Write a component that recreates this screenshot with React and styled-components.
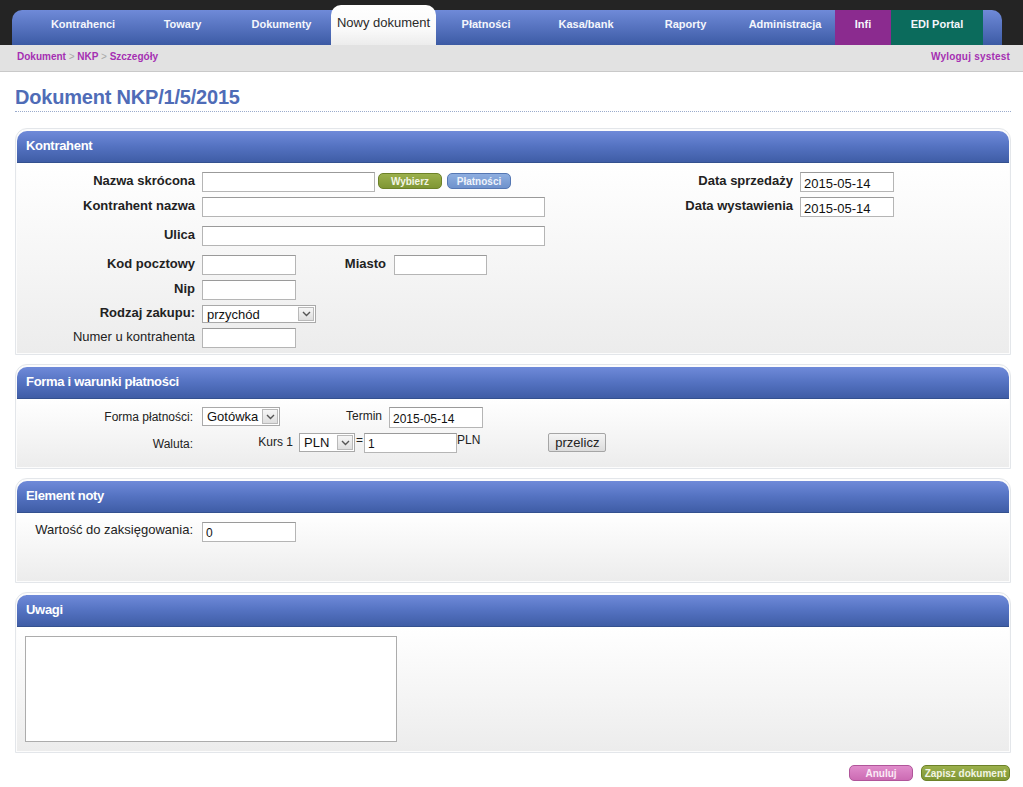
import React from "react";
import styled, { createGlobalStyle } from "styled-components";

const Global = createGlobalStyle`
  html, body { margin: 0; padding: 0; background: #fff; }
  body { font-family: "Liberation Sans", Arial, sans-serif; color: #222; }
  * { box-sizing: border-box; }
`;

const Page = styled.div`
  width: 1023px;
  min-height: 787px;
  background: #fff;
`;

const TopBar = styled.div`
  background: #242424;
  padding: 10px 21px 0 12px;
`;

const TabStrip = styled.nav`
  display: flex;
  height: 35px;
  padding-left: 21px;
  border-radius: 10px 10px 0 0;
  background: linear-gradient(#6f8ad8, #4462ad 85%, #3c5aa3);
`;

const Tab = styled.div`
  width: ${(p) => p.$w}px;
  height: 35px;
  padding-top: 7px;
  text-align: center;
  font-size: 11px;
  line-height: 14px;
  font-weight: bold;
  color: #f4f6fc;
  background: ${(p) => p.$bg || "transparent"};
`;

const ActiveTab = styled.div`
  width: 105px;
  height: 40px;
  margin-top: -5px;
  padding-top: 10px;
  text-align: center;
  font-size: 13px;
  line-height: 16px;
  color: #2a2a2a;
  border-radius: 10px 10px 0 0;
  background: linear-gradient(#ffffff, #fafafa 60%, #ececec);
`;

const Crumbs = styled.div`
  display: flex;
  justify-content: space-between;
  height: 27px;
  padding: 6px 13px 0 17px;
  background: #e2e2e2;
  border-bottom: 1px solid #c9c9c9;
  font-size: 10px;
  line-height: 12px;
  font-weight: bold;
  color: #a52fb2;
`;

const Sep = styled.span`
  color: #a8a8a8;
  font-weight: normal;
`;

const Logout = styled.span`
  letter-spacing: 0.2px;
`;

const Content = styled.div`
  padding: 0 12px 0 15px;
`;

const Title = styled.h1`
  margin: 14px 0 0;
  padding-bottom: 2px;
  font-size: 20px;
  line-height: 23px;
  font-weight: bold;
  color: #4f6cb7;
  border-bottom: 1px dotted #9aabcc;
  letter-spacing: -0.2px;
`;

const Panel = styled.section`
  margin-top: ${(p) => p.$mt}px;
  border: 1px solid #e3e6ea;
  border-radius: 12px 12px 0 0;
  padding: 2px 1px 1px;
  background: #fcfcfc;
`;

const PanelHead = styled.h2`
  margin: 0;
  height: 32px;
  padding: 7px 0 0 9px;
  font-size: 13px;
  line-height: 16px;
  font-weight: bold;
  color: #fff;
  border-radius: 10px 10px 0 0;
  background: linear-gradient(#6f8ad9, #5472c1 50%, #3f5da6);
  border-bottom: 1px solid #34518f;
  letter-spacing: -0.3px;
`;

const PanelBody = styled.div`
  height: ${(p) => p.$h}px;
  padding: ${(p) => p.$pad};
  background: linear-gradient(#ffffff, #f5f5f5 55%, #ececec);
  display: ${(p) => (p.$split ? "flex" : "block")};
  justify-content: space-between;
`;

const Column = styled.div`
  display: flex;
  flex-direction: column;
  padding-right: ${(p) => p.$pr || 0}px;
`;

const Row = styled.div`
  display: flex;
  align-items: flex-start;
  margin-top: ${(p) => p.$mt || 0}px;
`;

const Label = styled.div`
  width: ${(p) => p.$w}px;
  padding-right: ${(p) => (p.$pr ?? 7)}px;
  padding-top: ${(p) => (p.$pt ?? 1)}px;
  text-align: right;
  font-size: ${(p) => p.$fs || 13}px;
  line-height: 16px;
  font-weight: ${(p) => (p.$bold ? "bold" : "normal")};
  color: #222;
  white-space: nowrap;
  flex-shrink: 0;
`;

const Inline = styled.span`
  font-size: ${(p) => p.$fs || 12}px;
  line-height: 14px;
  padding: 0 ${(p) => p.$px || 0}px;
  color: #222;
`;

const Input = styled.input`
  width: ${(p) => p.$w}px;
  height: ${(p) => p.$h || 20}px;
  margin: 0;
  padding: 2px 3px 0;
  font-family: "Liberation Sans", Arial, sans-serif;
  font-size: ${(p) => p.$fs || 13}px;
  color: #111;
  background: #fff;
  border: 1px solid #b5b5b5;
  border-top-color: #9a9a9a;
  outline: none;
`;

const SelectBox = styled.div`
  display: flex;
  align-items: center;
  justify-content: space-between;
  width: ${(p) => p.$w}px;
  height: ${(p) => p.$h || 19}px;
  padding: 0 1px 0 4px;
  font-size: 13px;
  color: #111;
  background: #fff;
  border: 1px solid #a9a9a9;
`;

const Arrow = styled.span`
  display: flex;
  align-items: center;
  justify-content: center;
  width: 16px;
  height: calc(100% - 2px);
  border: 1px solid #b9b9b9;
  background: linear-gradient(#f6f6f6, #dedede);
`;

const SmallBtn = styled.button`
  width: ${(p) => p.$w}px;
  height: 16px;
  margin: 1px 0 0 ${(p) => p.$ml || 0}px;
  padding: 0;
  font-family: "Liberation Sans", Arial, sans-serif;
  font-size: 10px;
  font-weight: bold;
  color: ${(p) => p.$fg};
  border-radius: 5px;
  border: 1px solid ${(p) => p.$bd};
  background: ${(p) => p.$bg};
`;

const GrayBtn = styled.button`
  width: 58px;
  height: 19px;
  margin: 0 0 0 ${(p) => p.$ml}px;
  padding: 0;
  font-family: "Liberation Sans", Arial, sans-serif;
  font-size: 13px;
  color: #222;
  border: 1px solid #a5a5a5;
  border-radius: 2px;
  background: linear-gradient(#f4f4f4, #dcdcdc);
`;

const Notes = styled.textarea`
  display: block;
  width: 372px;
  height: 106px;
  margin: 0;
  resize: none;
  background: #fff;
  border: 1px solid #acacac;
`;

const Actions = styled.div`
  display: flex;
  justify-content: flex-end;
  gap: 8px;
  margin-top: 11px;
  padding-right: 1px;
`;

const Chevron = () => (
  <svg width="9" height="6" viewBox="0 0 9 6">
    <polyline points="1,1 4.5,4.5 8,1" fill="none" stroke="#555" strokeWidth="1.4" />
  </svg>
);

const Select = ({ w, h, children }) => (
  <SelectBox $w={w} $h={h}>
    <span>{children}</span>
    <Arrow>
      <Chevron />
    </Arrow>
  </SelectBox>
);

const green = "linear-gradient(#9bb04c, #7f9634)";
const blue = "linear-gradient(#8eaee0, #6f92cc)";
const pink = "linear-gradient(#e08ccb, #cc6bb3)";

export default function App() {
  return (
    <Page>
      <Global />
      <TopBar>
        <TabStrip>
          <Tab $w={100}>Kontrahenci</Tab>
          <Tab $w={99}>Towary</Tab>
          <Tab $w={99}>Dokumenty</Tab>
          <ActiveTab>Nowy dokument</ActiveTab>
          <Tab $w={100}>Płatności</Tab>
          <Tab $w={100}>Kasa/bank</Tab>
          <Tab $w={99}>Raporty</Tab>
          <Tab $w={100}>Administracja</Tab>
          <Tab $w={56} $bg="#8b2b8f">Infi</Tab>
          <Tab $w={92} $bg="#0b6b5c">EDI Portal</Tab>
        </TabStrip>
      </TopBar>
      <Crumbs>
        <span>
          Dokument <Sep>&gt;</Sep> NKP <Sep>&gt;</Sep> Szczegóły
        </span>
        <Logout>Wyloguj systest</Logout>
      </Crumbs>
      <Content>
        <Title>Dokument NKP/1/5/2015</Title>

        <Panel $mt={16}>
          <PanelHead>Kontrahent</PanelHead>
          <PanelBody $h={190} $pad="9px 0 5px 0" $split>
            <Column>
              <Row>
                <Label $w={185} $bold>Nazwa skrócona</Label>
                <Input $w={173} />
                <SmallBtn $w={64} $ml={3} $bg={green} $bd="#6c8128" $fg="#f2f5e4">Wybierz</SmallBtn>
                <SmallBtn $w={64} $ml={5} $bg={blue} $bd="#5577b3" $fg="#eef3fb">Płatności</SmallBtn>
              </Row>
              <Row $mt={5}>
                <Label $w={185} $bold>Kontrahent nazwa</Label>
                <Input $w={343} />
              </Row>
              <Row $mt={9}>
                <Label $w={185} $bold>Ulica</Label>
                <Input $w={343} />
              </Row>
              <Row $mt={9}>
                <Label $w={185} $bold>Kod pocztowy</Label>
                <Input $w={94} />
                <Label $w={98} $pr={8} $bold>Miasto</Label>
                <Input $w={93} />
              </Row>
              <Row $mt={5}>
                <Label $w={185} $bold>Nip</Label>
                <Input $w={94} />
              </Row>
              <Row $mt={5}>
                <Label $w={185} $pt={0} $bold>Rodzaj zakupu:</Label>
                <Select w={114} h={18}>przychód</Select>
              </Row>
              <Row $mt={5}>
                <Label $w={185}>Numer u kontrahenta</Label>
                <Input $w={94} />
              </Row>
            </Column>
            <Column $pr={115}>
              <Row>
                <Label $w={140} $bold>Data sprzedaży</Label>
                <Input $w={94} defaultValue="2015-05-14" />
              </Row>
              <Row $mt={5}>
                <Label $w={140} $bold>Data wystawienia</Label>
                <Input $w={94} defaultValue="2015-05-14" />
              </Row>
            </Column>
          </PanelBody>
        </Panel>

        <Panel $mt={9}>
          <PanelHead>Forma i warunki płatności</PanelHead>
          <PanelBody $h={68} $pad="8px 0 0 0">
            <Row>
              <Label $w={185} $pr={9} $fs={12} $pt={2}>Forma płatności:</Label>
              <Select w={78} h={19}>Gotówka</Select>
              <Label $w={109} $pr={7} $fs={12} $pt={1}>Termin</Label>
              <Input $w={94} $h={21} $fs={12} defaultValue="2015-05-14" />
            </Row>
            <Row $mt={5}>
              <Label $w={185} $pr={9} $fs={12} $pt={3}>Waluta:</Label>
              <Label $w={97} $pr={6} $fs={12} $pt={1}>Kurs 1</Label>
              <Select w={56} h={19}>PLN</Select>
              <Inline $px={1}>=</Inline>
              <Input $w={93} $fs={12} defaultValue="1" />
              <Inline>PLN</Inline>
              <GrayBtn $ml={68}>przelicz</GrayBtn>
            </Row>
          </PanelBody>
        </Panel>

        <Panel $mt={9}>
          <PanelHead>Element noty</PanelHead>
          <PanelBody $h={68} $pad="9px 0 0 0">
            <Row>
              <Label $w={185} $pr={9} $pt={0}>Wartość do zaksięgowania:</Label>
              <Input $w={94} $fs={12} defaultValue="0" />
            </Row>
          </PanelBody>
        </Panel>

        <Panel $mt={9}>
          <PanelHead>Uwagi</PanelHead>
          <PanelBody $h={124} $pad="9px 0 0 8px">
            <Notes />
          </PanelBody>
        </Panel>

        <Actions>
          <SmallBtn $w={64} $bg={pink} $bd="#b0559a" $fg="#fbeaf6">Anuluj</SmallBtn>
          <SmallBtn $w={89} $bg={green} $bd="#6c8128" $fg="#f2f5e4">Zapisz dokument</SmallBtn>
        </Actions>
      </Content>
    </Page>
  );
}
